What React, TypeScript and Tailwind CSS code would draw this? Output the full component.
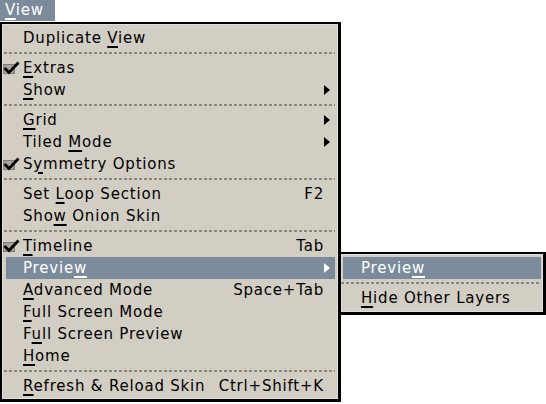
import type { ReactNode } from 'react';

type Item =
  | { sep: true }
  | {
      sep?: false;
      label: string;
      mnemonic: number;
      shortcut?: string;
      checked?: boolean;
      submenu?: boolean;
      active?: boolean;
    };

const items: Item[] = [
  { label: 'Duplicate View', mnemonic: 10 },
  { sep: true },
  { label: 'Extras', mnemonic: 0, checked: true },
  { label: 'Show', mnemonic: 0, submenu: true },
  { sep: true },
  { label: 'Grid', mnemonic: 0, submenu: true },
  { label: 'Tiled Mode', mnemonic: 6, submenu: true },
  { label: 'Symmetry Options', mnemonic: 1, checked: true },
  { sep: true },
  { label: 'Set Loop Section', mnemonic: 4, shortcut: 'F2' },
  { label: 'Show Onion Skin', mnemonic: 3 },
  { sep: true },
  { label: 'Timeline', mnemonic: 0, checked: true, shortcut: 'Tab' },
  { label: 'Preview', mnemonic: 6, submenu: true, active: true },
  { label: 'Advanced Mode', mnemonic: 0, shortcut: 'Space+Tab' },
  { label: 'Full Screen Mode', mnemonic: 0 },
  { label: 'Full Screen Preview', mnemonic: 1 },
  { label: 'Home', mnemonic: 0 },
  { sep: true },
  { label: 'Refresh & Reload Skin', mnemonic: 0, shortcut: 'Ctrl+Shift+K' },
];

/** Label with the mnemonic letter underlined. */
function Label({ text, at }: { text: string; at: number }) {
  return (
    <span className="whitespace-pre">
      {text.slice(0, at)}
      <span className="underline decoration-2 underline-offset-[3px]">{text[at]}</span>
      {text.slice(at + 1)}
    </span>
  );
}

function CheckIcon() {
  return (
    <svg width="18" height="16" viewBox="0 0 18 16" className="-ml-[3px] shrink-0">
      <rect x="0" y="4" width="12" height="10" fill="#7f7b74" />
      <rect x="1" y="5" width="10" height="8" fill="#a8a399" />
      <path d="M1.5 8 L6 12.5 L15.5 2.5" fill="none" stroke="#000" strokeWidth="2.8" />
    </svg>
  );
}

function Arrow({ white }: { white?: boolean }) {
  return (
    <svg width="6" height="10" viewBox="0 0 6 10" className="ml-[1px]">
      <path d="M0 0 L6 5 L0 10 Z" fill={white ? '#ffffff' : '#000000'} />
    </svg>
  );
}

function Separator() {
  return (
    <div className="flex h-[8px] items-center -ml-[2px]">
      <div className="h-[2px] w-full bg-[repeating-linear-gradient(90deg,#8c877e_0_3px,transparent_3px_5px)]" />
    </div>
  );
}

function Row({ children, active }: { children: ReactNode; active?: boolean }) {
  return (
    <div
      className={`flex h-[22px] items-center ${
        active ? 'bg-[#7b8b9c] text-white' : 'text-black'
      }`}
    >
      {children}
    </div>
  );
}

export default function App() {
  return (
    <div
      className="relative h-[404px] w-[546px] overflow-hidden bg-white text-[15px] leading-none tracking-[0.8px]"
      style={{ fontFamily: '"DejaVu Sans", sans-serif' }}
    >
      {/* Menu bar */}
      <div className="flex h-[22px]">
        <div className="flex h-[21px] w-[55px] items-center bg-[#7b8b9c] pl-[5px] text-white">
          <Label text="View" at={0} />
        </div>
      </div>

      {/* View menu */}
      <div className="w-[341px] border-t-2 border-l-2 border-r-[3px] border-b-[3px] border-black bg-[#d3cec4]">
        <div className="border border-[#e3dfd7] pt-[2px] pb-[1px] pl-[3px] pr-[2px]">
          {items.map((item, i) =>
            item.sep ? (
              <Separator key={i} />
            ) : (
              <Row key={i} active={item.active}>
                <div className="flex w-[17px] shrink-0 items-center">
                  {item.checked && <CheckIcon />}
                </div>
                <Label text={item.label} at={item.mnemonic} />
                <div className="flex-1" />
                {item.shortcut && (
                  <span className="-mr-[1px] whitespace-pre">{item.shortcut}</span>
                )}
                <div className="flex w-[12px] shrink-0 items-center">
                  {item.submenu && <Arrow white={item.active} />}
                </div>
              </Row>
            ),
          )}
        </div>
      </div>

      {/* Preview submenu */}
      <div className="absolute left-[339px] top-[252px] w-[207px] border-t-2 border-l-2 border-r-[3px] border-b-[3px] border-black bg-[#d3cec4]">
        <div className="border border-[#e3dfd7] pt-[2px] pb-[2px] pl-[1px] pr-[1px]">
          <Row active>
            <div className="w-[18px] shrink-0" />
            <Label text="Preview" at={6} />
          </Row>
          <Separator />
          <Row>
            <div className="w-[18px] shrink-0" />
            <Label text="Hide Other Layers" at={0} />
          </Row>
        </div>
      </div>
    </div>
  );
}
